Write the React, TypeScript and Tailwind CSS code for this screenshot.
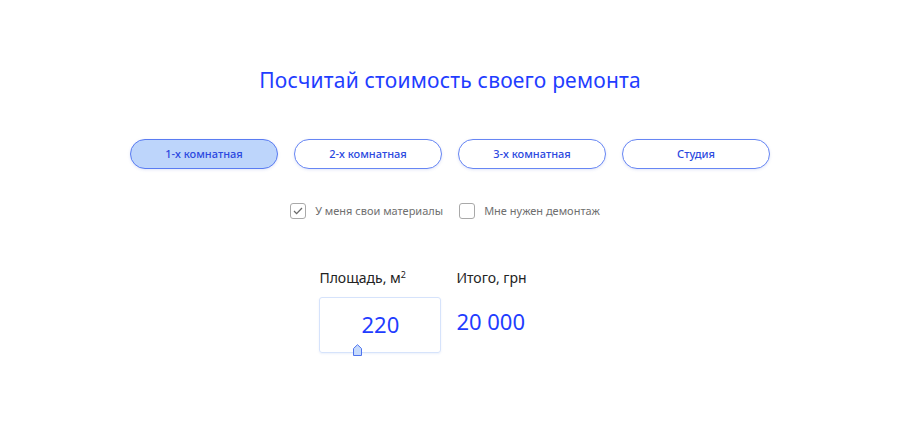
import React, { useState } from 'react';

const rooms = ['1-х комнатная', '2-х комнатная', '3-х комнатная', 'Студия'];

function Check({ checked, label }: { checked: boolean; label: string }) {
  return (
    <label className="flex items-center gap-[9px] cursor-pointer">
      <span className="w-[16px] h-[16px] rounded-[3px] border border-[#a9a9a9] flex items-center justify-center bg-white">
        {checked && (
          <svg width="10" height="8" viewBox="0 0 10 8" fill="none">
            <path d="M1 4l2.6 2.6L9 1" stroke="#6b6b6b" strokeWidth="1.3" />
          </svg>
        )}
      </span>
      <span className="text-[11px] text-[#6f6f6f]">{label}</span>
    </label>
  );
}

export default function App() {
  const [active, setActive] = useState(0);

  return (
    <div className="w-[900px] h-[427px] bg-white flex flex-col items-center font-['Noto_Sans',sans-serif]">
      <h1 className="mt-[64px] text-[21px] leading-[32px] text-[#1f3dff] tracking-[0.2px]">
        Посчитай стоимость своего ремонта
      </h1>

      <div className="mt-[43px] flex gap-[16px]">
        {rooms.map((room, i) => (
          <button
            key={room}
            onClick={() => setActive(i)}
            className={`w-[148px] h-[30px] rounded-full border text-[11px] font-medium text-[#2c49e0] shadow-[0_1px_3px_rgba(60,90,200,0.15)] ${
              i === active ? 'bg-[#bdd5fb] border-[#5a7cf2]' : 'bg-white border-[#6786f4]'
            }`}
          >
            {room}
          </button>
        ))}
      </div>

      <div className="mt-[34px] flex gap-[16px] pr-[10px]">
        <Check checked label="У меня свои материалы" />
        <Check checked={false} label="Мне нужен демонтаж" />
      </div>

      <div className="mt-[49px] flex gap-[15px] pr-[54px]">
        <div className="flex flex-col">
          <span className="text-[14px] leading-[18px] text-[#222]">
            Площадь, м<sup className="text-[9px]">2</sup>
          </span>
          <div className="relative mt-[10px] w-[122px] h-[56px] rounded-[3px] border border-[#d6e3fb] flex items-center justify-center shadow-[0_1px_2px_rgba(100,140,220,0.12)]">
            <span className="text-[22px] text-[#1f3dff]">220</span>
            <svg className="absolute left-[33px] bottom-[-4px]" width="9" height="12" viewBox="0 0 9 12">
              <path d="M0.5 11.5V4.5L4.5 0.7L8.5 4.5V11.5Z" fill="#c6dafc" stroke="#4f74ee" strokeWidth="1" />
            </svg>
          </div>
        </div>
        <div className="flex flex-col">
          <span className="text-[14px] leading-[18px] text-[#222]">Итого, грн</span>
          <span className="mt-[19px] text-[22px] leading-[30px] text-[#1f3dff]">20 000</span>
        </div>
      </div>
    </div>
  );
}
